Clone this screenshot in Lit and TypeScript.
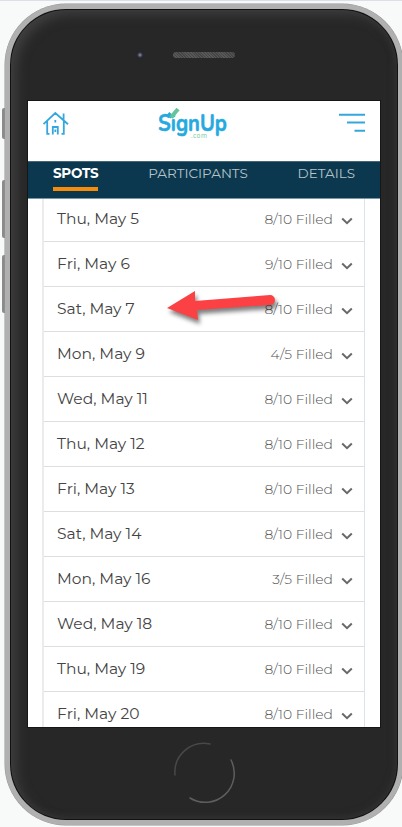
import { LitElement, html, css } from "lit";
import { customElement } from "lit/decorators.js";

const days: [string, string][] = [
  ["Thu, May 5", "8/10"], ["Fri, May 6", "9/10"], ["Sat, May 7", "8/10"], ["Mon, May 9", "4/5"],
  ["Wed, May 11", "8/10"], ["Thu, May 12", "8/10"], ["Fri, May 13", "8/10"], ["Sat, May 14", "8/10"],
  ["Mon, May 16", "3/5"], ["Wed, May 18", "8/10"], ["Thu, May 19", "8/10"], ["Fri, May 20", "8/10"],
];

@customElement("app-root")
export class AppRoot extends LitElement {
  static styles = css`
    :host { display: block; position: relative; width: 402px; height: 827px; overflow: hidden; background: #f8faf9; box-sizing: border-box; border-top: 1px solid #dcdfe6; font-family: Montserrat, Inter, "Noto Sans", sans-serif; }
    * { box-sizing: border-box; }
    .side { position: absolute; left: 2px; width: 4px; border-radius: 2px 0 0 2px; background: #8b8b8b; }
    .mute { top: 107px; height: 31px; }
    .up { top: 179px; height: 58px; }
    .down { top: 254px; height: 58px; }
    .phone { position: relative; margin: 3px 0 0 5px; width: 398px; height: 821px; border-radius: 61px; border: 5px solid #b1b0b0; background: #272727; box-shadow: 0 0 0 .5px #929292, inset 0 0 0 1px #111, inset 6px 5px 12px #404040, inset -3px -3px 7px #303030; padding: 92px 18px 0; display: flex; flex-direction: column; align-items: center; }
    .camera { position: absolute; left: 126px; top: 42px; width: 8px; height: 8px; border-radius: 50%; background: radial-gradient(circle, #77777f 0 1px, #393945 2px, #20202b 4px); }
    .speaker { position: absolute; left: 163px; top: 43px; width: 62px; height: 6px; border-radius: 3px; background: repeating-linear-gradient(45deg, #585858 0 1px, #454545 1px 2px); }
    .screen { width: 352px; height: 626px; background: #fff; flex: none; display: flex; flex-direction: column; overflow: hidden; box-shadow: 0 0 0 1px #161616; }
    .top { height: 60px; flex: none; display: flex; padding: 8px 15px 0; }
    .logo { margin: 0 112px 0 89px; font-family: Nunito, Quicksand, "Open Sans", sans-serif; }
    .tabs { height: 38px; flex: none; background: #0b384e; border-bottom: 1px solid #7a96a2; border-top: 1px solid #456776; display: flex; justify-content: space-between; padding: 2px 25px 0; font-size: 13.5px; line-height: 19px; color: #b6c3ca; }
    .tab { height: 27px; white-space: nowrap; }
    .active { font-weight: 700; color: #fff; border-bottom: 4px solid #f78c0a; letter-spacing: -.25px; }
    .list { margin: 0 15px 0 14px; border-left: 2px solid #ececee; border-right: 1px solid #dce3ea; }
    .row { height: 45px; border-bottom: 1px solid #dedede; display: flex; align-items: center; padding: 0 11px 1px 13px; color: #444; }
    .row:first-child { height: 43px; padding-bottom: 3px; }
    .day { flex: 1; font-size: 15.5px; }
    .fill { font-size: 13.9px; color: #505050; font-weight: 300; }
    .chev { margin: 5px 0 0 8px; }
    .home { margin-top: 14px; flex: none; }
    .arrow { position: absolute; left: 155px; top: 284px; filter: drop-shadow(2px 4px 2px rgba(0,0,0,.5)); }
    svg { display: block; overflow: visible; flex: none; }
  `;

  private house() {
    return html`<svg width="26" height="26" viewBox="0 0 26 26" fill="none" stroke="#36a7de" stroke-width="1.8">
      <path d="M.5 15.2 12.3 4 25 15.2M4.2 12V25.4M20.8 12V25.4M3.3 24.9H6.5M18.5 24.9H21.7M9.8 25.4V18H14.8V25.4M20.6 11.5V4.6M12.3 11V13.6M12.3 20.5V23"/></svg>`;
  }
  private logo() {
    return html`<svg class="logo" width="69" height="34" viewBox="0 0 69 34">
      <text x="0" y="22" font-size="23" font-weight="700" fill="#25a9df" stroke="#25a9df" stroke-width=".5" textLength="69" lengthAdjust="spacingAndGlyphs">SignUp</text>
      <path d="M10 4.5 14 8" stroke="#25a9df" stroke-width="4" fill="none"/><path d="M13 8.5 20 0" stroke="#65c49a" stroke-width="4" fill="none"/>
      <text x="33" y="28.5" font-size="7" fill="#79c9a0" textLength="16">.com</text></svg>`;
  }

  render() {
    return html`
      <div class="side mute"></div><div class="side up"></div><div class="side down"></div>
      <div class="phone">
        <div class="camera"></div><div class="speaker"></div>
        <div class="screen">
          <div class="top">${this.house()}${this.logo()}
            <svg width="26" height="26" viewBox="0 0 26 26" stroke="#36a7de" stroke-width="2"><path d="M0 5.7H26M8 13.6H26M15.5 21.7H26"/></svg>
          </div>
          <div class="tabs"><div class="tab active">SPOTS</div><div class="tab">PARTICIPANTS</div><div class="tab">DETAILS</div></div>
          <div class="list">${days.map(([d, f]) => html`<div class="row"><span class="day">${d}</span><span class="fill">${f} Filled</span>
            <svg class="chev" width="12" height="8" viewBox="0 0 12 8" fill="none" stroke="#686868" stroke-width="2"><path d="M1.2 1.5 6 6.2 10.8 1.5"/></svg></div>`)}</div>
        </div>
        <svg class="home" width="62" height="62" viewBox="0 0 62 62" fill="none" stroke-width="1.5" stroke-linecap="round">
          <path d="M2 34A29 29 0 0 1 37 3" stroke="#484848"/><path d="M17 57A29 29 0 0 0 58 19" stroke="#5e5e5e"/></svg>
      </div>
      <svg class="arrow" width="130" height="50" viewBox="0 0 130 50"><path d="M12 23 40 6V16L115 10A5 5 0 0 1 115 20L42 25 43 35Z" fill="#fc4144"/></svg>`;
  }
}
